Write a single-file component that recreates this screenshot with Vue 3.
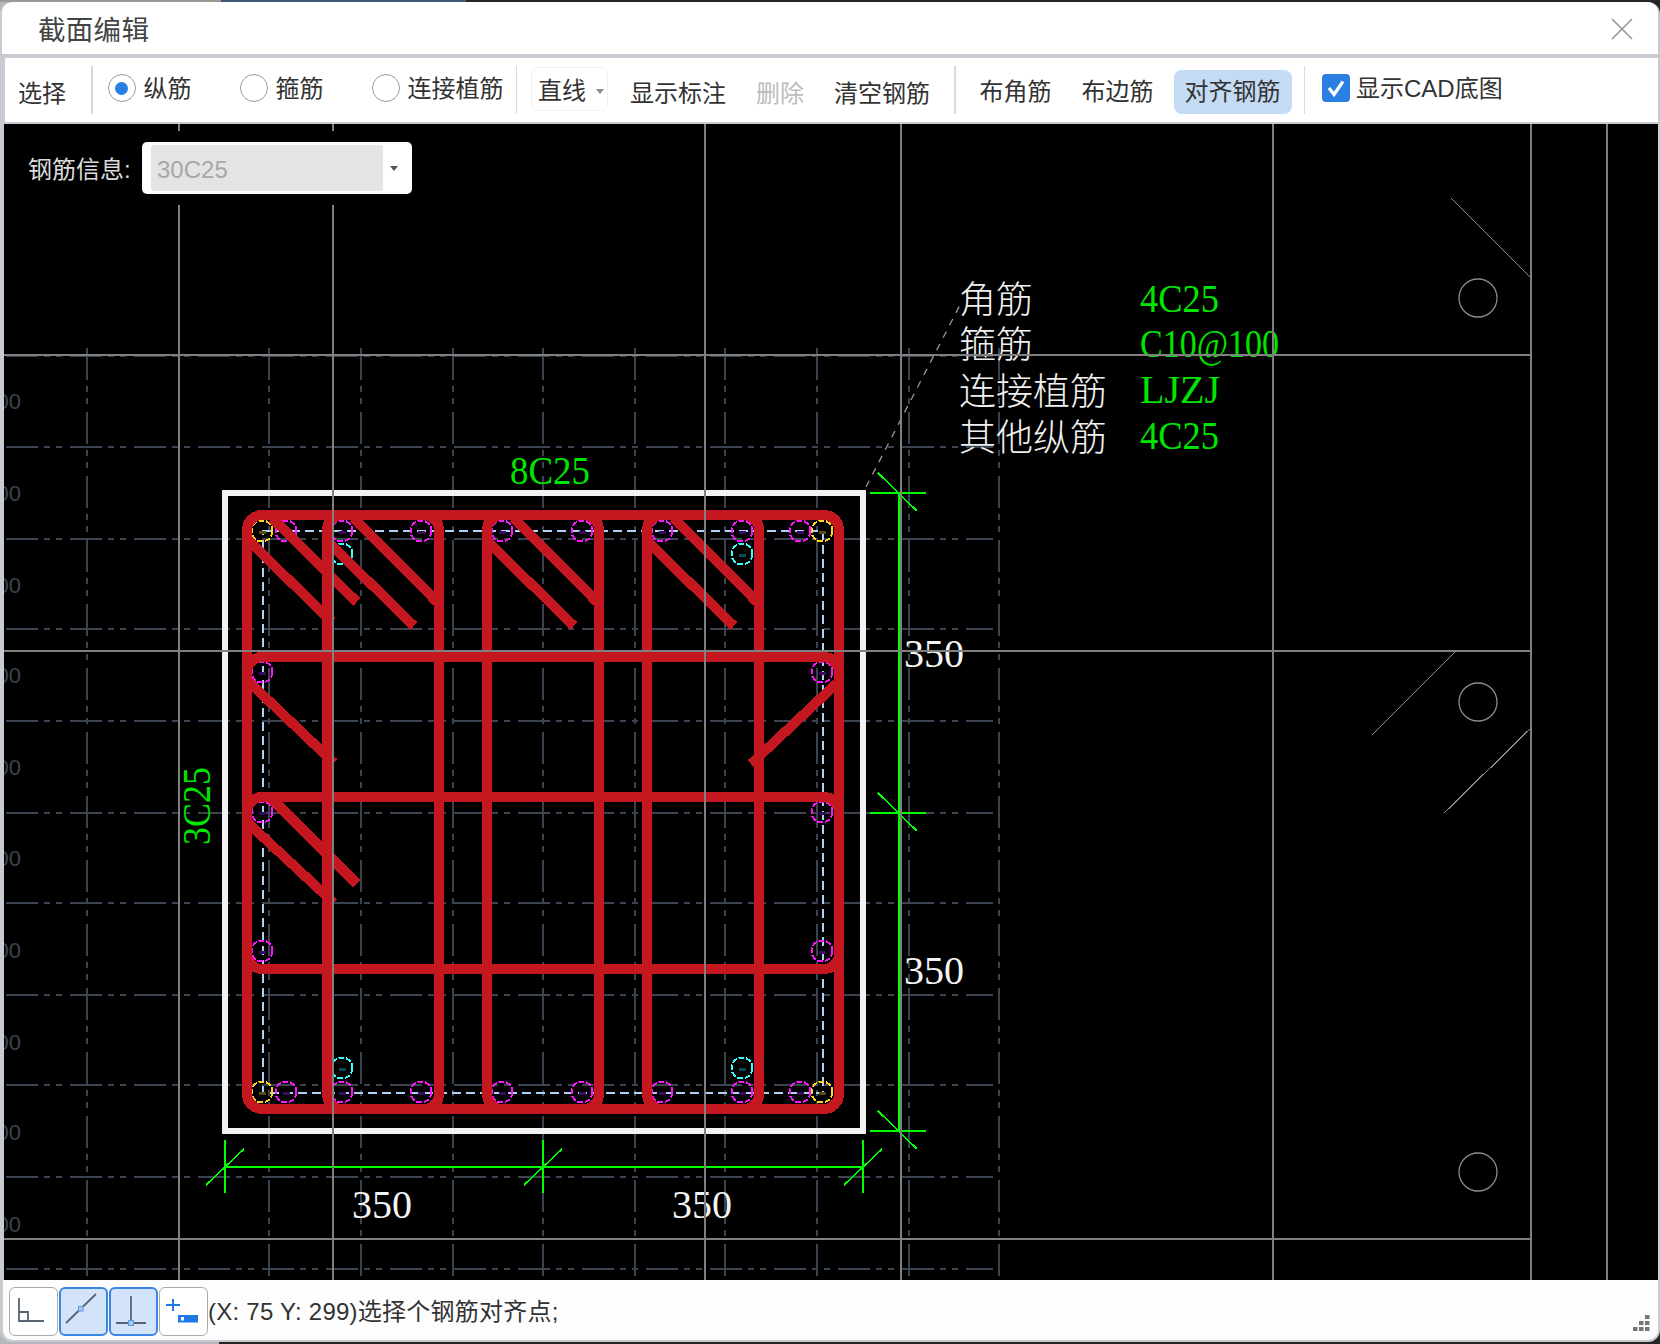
<script setup>
const gridX = [87, 179, 269, 361, 453, 543, 635, 725, 817, 909, 999]
const gridY = [356, 447, 539, 629, 721, 813, 903, 995, 1085, 1177, 1269]
const grayX = [179, 333, 705, 901, 1273, 1531, 1607]
const grayY = [355, 651, 1239]
const zeroY = [409, 501, 593, 683, 775, 866, 958, 1050, 1140, 1232]

const magenta = []
for (const x of [286, 342, 421, 502, 582, 662, 742, 800]) {
  magenta.push([x, 531], [x, 1092])
}
for (const y of [672, 812, 951]) {
  magenta.push([262, y], [822, y])
}
const bars = [
  ...magenta.map(([x, y]) => ({ x, y, c: '#ff14ff', d: '#3a0a60' })),
  ...[[262, 531], [822, 531], [262, 1092], [822, 1092]].map(([x, y]) => ({ x, y, c: '#ffd51e', d: '#5a4a10' })),
  ...[[342, 554], [742, 554], [342, 1068], [742, 1068]].map(([x, y]) => ({ x, y, c: '#33ffff', d: '#0a4a5a' }))
]

const stirrups = [
  [247, 515, 592, 594],
  [327, 515, 112, 594],
  [487, 515, 112, 594],
  [647, 515, 112, 594],
  [247, 657, 592, 312],
  [247, 797, 592, 172]
]
const hooks = [
  [249, 541, 332, 622],
  [272, 518, 357, 602],
  [327, 541, 414, 626],
  [354, 518, 437, 602],
  [487, 541, 574, 626],
  [514, 518, 597, 602],
  [647, 541, 734, 626],
  [674, 518, 757, 602],
  [249, 682, 334, 763],
  [272, 799, 357, 884],
  [249, 824, 334, 903],
  [836, 684, 751, 764]
]
const ticksV = [493, 813, 1131]
const ticksH = [225, 543, 863]
const labels = [
  { t: '角筋', y: 313 },
  { t: '箍筋', y: 358 },
  { t: '连接植筋', y: 405 },
  { t: '其他纵筋', y: 451 }
]
const values = [
  { t: '4C25', y: 312, w: 79 },
  { t: 'C10@100', y: 357, w: 139 },
  { t: 'LJZJ', y: 403, w: 80 },
  { t: '4C25', y: 449, w: 79 }
]
const dims = [
  [904, 667],
  [904, 984],
  [352, 1218],
  [672, 1218]
]
const grip = [[12, 0], [6, 6], [12, 6], [0, 12], [6, 12], [12, 12]]
</script>

<template>
  <div class="page">
    <div class="strip"></div>
    <div class="win">
      <header class="head">
        <span class="title">截面编辑</span>
        <svg class="close" viewBox="0 0 22 22" width="22" height="22">
          <path d="M1 1 L21 21 M21 1 L1 21" stroke="#999" stroke-width="1.7" fill="none" />
        </svg>
      </header>

      <div class="tools">
        <span class="txt low i-pick">选择</span>
        <i class="sep s1"></i>
        <span class="radio on r1"></span>
        <span class="txt up l1">纵筋</span>
        <span class="radio r2"></span>
        <span class="txt up l2">箍筋</span>
        <span class="radio r2"></span>
        <span class="txt up l2">连接植筋</span>
        <i class="sep s2"></i>
        <span class="drop"><span class="txt">直线</span><i class="tri"></i></span>
        <span class="txt low i-mark">显示标注</span>
        <span class="txt low off i-del">删除</span>
        <span class="txt low i-clear">清空钢筋</span>
        <i class="sep s3"></i>
        <span class="txt mid i-corner">布角筋</span>
        <span class="txt mid i-edge">布边筋</span>
        <span class="active"><span class="txt">对齐钢筋</span></span>
        <i class="sep s4"></i>
        <span class="check">
          <svg viewBox="0 0 28 28" width="28" height="28">
            <path d="M7 14 L12 20.5 L21 7.5" stroke="#fff" stroke-width="3.2" fill="none" />
          </svg>
        </span>
        <span class="txt up l3">显示CAD底图</span>
      </div>

      <div class="canvas">
        <svg class="cad" viewBox="4 124 1652 1156" width="1652" height="1156" shape-rendering="crispEdges">
          <g stroke="#3a4450" stroke-width="2" stroke-dasharray="32 6 6 6 6 8" fill="none">
            <line v-for="y in gridY" :key="'h' + y" x1="6" :y1="y" x2="993" :y2="y" />
            <line v-for="x in gridX" :key="'v' + x" :x1="x" y1="348" :x2="x" y2="1280" />
          </g>
          <text
            v-for="y in zeroY"
            :key="'z' + y"
            class="zero"
            x="21"
            :y="y"
            text-anchor="end"
          >00</text>

          <rect x="225" y="493" width="638" height="638" fill="none" stroke="#f2f2f2" stroke-width="6" />
          <rect
            x="263"
            y="531"
            width="560"
            height="562"
            fill="none"
            stroke="#b0d2f2"
            stroke-width="2"
            stroke-dasharray="9 5"
          />

          <g v-for="(b, i) in bars" :key="'b' + i">
            <circle :cx="b.x" :cy="b.y" r="10.5" fill="none" :stroke="b.c" stroke-width="2" stroke-dasharray="6 1.6" />
            <rect :x="b.x - 3" :y="b.y" width="7" height="3" :fill="b.d" />
          </g>

          <g fill="none" stroke="#c5171f" stroke-width="10">
            <rect
              v-for="(s, i) in stirrups"
              :key="'s' + i"
              :x="s[0]"
              :y="s[1]"
              :width="s[2]"
              :height="s[3]"
              rx="15"
              ry="15"
            />
            <line
              v-for="(h, i) in hooks"
              :key="'k' + i"
              :x1="h[0]"
              :y1="h[1]"
              :x2="h[2]"
              :y2="h[3]"
            />
          </g>

          <g stroke="#00ff00" fill="none">
            <line x1="899" y1="493" x2="899" y2="1131" stroke-width="2" />
            <line x1="225" y1="1167" x2="863" y2="1167" stroke-width="2" />
            <g v-for="y in ticksV" :key="'tv' + y" stroke-width="1.6">
              <line x1="870" :y1="y" x2="926" :y2="y" />
              <line x1="878" :y1="y - 20" x2="917" :y2="y + 18" />
            </g>
            <g v-for="x in ticksH" :key="'th' + x" stroke-width="1.6">
              <line :x1="x" y1="1140" :x2="x" y2="1193" stroke-width="2" />
              <line :x1="x - 19" y1="1185" :x2="x + 19" y2="1149" />
            </g>
          </g>

          <line
            x1="866"
            y1="487"
            x2="960"
            y2="305"
            stroke="#999"
            stroke-width="1.3"
            stroke-dasharray="7 7"
            shape-rendering="auto"
          />

          <g fill="none" stroke="#8a8a8a" stroke-width="1.3">
            <line x1="1451" y1="198" x2="1530" y2="277" />
            <line x1="1372" y1="735" x2="1456" y2="651" />
            <line x1="1444" y1="813" x2="1530" y2="729" />
            <circle cx="1478" cy="298" r="19" shape-rendering="auto" />
            <circle cx="1478" cy="702" r="19" shape-rendering="auto" />
            <circle cx="1478" cy="1172" r="19" shape-rendering="auto" />
          </g>

          <text class="green" x="510" y="484" textLength="80" lengthAdjust="spacingAndGlyphs">8C25</text>
          <text
            class="green"
            transform="translate(210 845) rotate(-90)"
            textLength="78"
            lengthAdjust="spacingAndGlyphs"
          >3C25</text>
          <text v-for="(d, i) in dims" :key="'d' + i" class="white" :x="d[0]" :y="d[1]">350</text>
          <text v-for="l in labels" :key="l.y" class="cjk" x="959" :y="l.y">{{ l.t }}</text>
          <text
            v-for="v in values"
            :key="v.y"
            class="green"
            x="1140"
            :y="v.y"
            :textLength="v.w"
            lengthAdjust="spacingAndGlyphs"
          >{{ v.t }}</text>

          <g stroke="#808080" stroke-width="2">
            <line v-for="x in grayX" :key="'gx' + x" :x1="x" y1="124" :x2="x" y2="1280" />
            <line v-for="y in grayY" :key="'gy' + y" x1="4" :y1="y" x2="1531" :y2="y" />
          </g>
        </svg>

        <div class="info">
          <span class="info-label">钢筋信息:</span>
          <div class="info-select">
            <span class="info-value">30C25</span>
            <i class="tri dark"></i>
          </div>
        </div>
      </div>

      <footer class="status">
        <button class="snap">
          <svg viewBox="0 0 49 49" width="49" height="49">
            <path d="M10 11 V34 H35 M10 25 H19 V34" fill="none" stroke="#596472" stroke-width="1.8" />
          </svg>
        </button>
        <button class="snap sel">
          <svg viewBox="0 0 49 49" width="49" height="49">
            <path d="M7 36 L37 7" fill="none" stroke="#596472" stroke-width="1.8" />
            <rect x="19.5" y="19.5" width="4.5" height="4.5" fill="#a8c8f0" stroke="#5b9bdf" />
          </svg>
        </button>
        <button class="snap sel">
          <svg viewBox="0 0 49 49" width="49" height="49">
            <path d="M22 9 V36 M7 36 H37" fill="none" stroke="#596472" stroke-width="1.8" />
            <rect x="19.5" y="33.5" width="5" height="5" fill="#a8c8f0" stroke="#5b9bdf" />
          </svg>
        </button>
        <button class="snap">
          <svg viewBox="0 0 49 49" width="49" height="49">
            <path d="M7 18 H21 M14 12 V24" fill="none" stroke="#1e78e6" stroke-width="2" />
            <rect x="19" y="28" width="20" height="7.5" fill="#1e78e6" />
            <rect x="22" y="30" width="3" height="3.5" fill="#fff" />
          </svg>
        </button>
        <span class="msg">(X: 75 Y: 299)选择个钢筋对齐点;</span>
        <svg class="grip" viewBox="0 0 17 17" width="17" height="17">
          <rect v-for="(g, i) in grip" :key="i" :x="g[0]" :y="g[1]" width="4.5" height="4" fill="#777" />
        </svg>
      </footer>
    </div>
  </div>
</template>

<style>
html,
body {
  margin: 0;
  background: #222;
}
</style>

<style scoped>
.page {
  width: 1660px;
  height: 1344px;
  overflow: hidden;
  background: linear-gradient(90deg, #b4b8bc 219px, #242424 219px);
  font-family: "Liberation Sans", "Noto Sans CJK SC", sans-serif;
  color: #333;
}
.strip {
  height: 2px;
  background: linear-gradient(
    90deg,
    #9a9a9a 0,
    #9a9a9a 221px,
    #3c5a7a 221px,
    #3c5a7a 466px,
    #262626 466px
  );
}
.win {
  box-sizing: border-box;
  height: 1340px;
  padding: 0 2px 2px;
  background: #c8cbd1;
  border-radius: 12px;
  overflow: hidden;
  display: flex;
  flex-direction: column;
}
.head {
  height: 52px;
  flex: none;
  background: #fff;
  display: flex;
  align-items: center;
  justify-content: space-between;
  padding: 0 25px 0 36px;
  margin-bottom: 4px;
  border-radius: 10px 10px 0 0;
}
.title {
  margin-top: 6px;
  font-size: 27.5px;
  line-height: 1;
  color: #444;
  letter-spacing: 0.3px;
}
.close {
  margin-top: 2px;
}
.tools {
  height: 64px;
  flex: none;
  margin: 0 0 2px 3px;
  background: #fff;
  display: flex;
  align-items: center;
  padding-left: 13px;
}
.txt {
  font-size: 24px;
  line-height: 1;
  white-space: nowrap;
  flex: none;
  color: #333;
}
.low {
  margin-top: 8px;
}
.mid {
  margin-top: 4px;
}
.up {
  margin-bottom: 2px;
}
.off {
  color: #bbb;
}
.sep {
  display: block;
  flex: none;
  width: 1.5px;
  height: 48px;
  background: #dadada;
}
.s1 {
  margin-left: 25px;
}
.s2 {
  margin-left: 12px;
}
.s3 {
  margin-left: 24px;
}
.s4 {
  margin-left: 12px;
}
.radio {
  box-sizing: border-box;
  flex: none;
  width: 28px;
  height: 28px;
  margin-bottom: 4px;
  border: 1.5px solid #9b9b9b;
  border-radius: 50%;
  background: #fff;
  display: flex;
  align-items: center;
  justify-content: center;
}
.radio.on::after {
  content: "";
  width: 13px;
  height: 13px;
  border-radius: 50%;
  background: #2b7fe3;
}
.r1 {
  margin-left: 15px;
}
.l1 {
  margin-left: 8px;
}
.r2 {
  margin-left: 48px;
}
.l2 {
  margin-left: 8px;
}
.l3 {
  margin-left: 6px;
}
.drop {
  box-sizing: border-box;
  flex: none;
  width: 77px;
  height: 44px;
  margin-left: 14px;
  margin-bottom: 2px;
  padding: 4px 0 0 6px;
  border: 1px solid #f1f1f1;
  border-radius: 7px;
  display: flex;
  align-items: center;
  gap: 10px;
}
.tri {
  display: block;
  flex: none;
  width: 0;
  height: 0;
  border-left: 4px solid transparent;
  border-right: 4px solid transparent;
  border-top: 5px solid #8c8c8c;
}
.tri.dark {
  border-top-color: #555;
}
.i-mark {
  margin-left: 22px;
}
.i-del {
  margin-left: 30px;
}
.i-clear {
  margin-left: 30px;
}
.i-corner {
  margin-left: 24px;
}
.i-edge {
  margin-left: 30px;
}
.active {
  flex: none;
  width: 118px;
  height: 44px;
  margin: 4px 0 0 20px;
  border-radius: 8px;
  background: #c3dbf3;
  display: flex;
  align-items: center;
  justify-content: center;
}
.check {
  flex: none;
  width: 28px;
  height: 28px;
  margin: 0 0 4px 17px;
  border-radius: 4px;
  background: #2b7fe3;
}
.check svg {
  display: block;
}
.canvas {
  position: relative;
  height: 1156px;
  flex: none;
  margin-left: 2px;
  background: #000;
  overflow: hidden;
}
.cad {
  display: block;
}
.zero {
  font-family: "Liberation Sans", sans-serif;
  font-size: 22px;
  fill: #3a4450;
}
.green {
  font-family: "Liberation Serif", serif;
  font-size: 40px;
  fill: #00e600;
}
.white {
  font-family: "Liberation Serif", serif;
  font-size: 40px;
  fill: #f4f4f4;
}
.cjk {
  font-family: "Liberation Serif", "Noto Sans CJK SC", serif;
  font-size: 37px;
  font-weight: 300;
  fill: #f0f0f0;
}
.info {
  position: absolute;
  left: 0;
  top: 7px;
  width: 412px;
  height: 74px;
  background: #000;
  display: flex;
  align-items: center;
}
.info-label {
  margin: 4px 0 0 24px;
  width: 114px;
  flex: none;
  font-size: 24px;
  line-height: 1;
  color: #dcdcdc;
  white-space: nowrap;
}
.info-select {
  box-sizing: border-box;
  flex: none;
  width: 270px;
  height: 52px;
  padding: 3px 0 3px 9px;
  background: #fff;
  border-radius: 5px;
  display: flex;
  align-items: center;
}
.info-value {
  box-sizing: border-box;
  width: 232px;
  height: 46px;
  padding: 2px 0 0 6px;
  margin-right: 7px;
  background: #e4e4e4;
  border-radius: 3px;
  font-size: 24px;
  line-height: 46px;
  color: #a8a8a8;
}
.status {
  height: 60px;
  flex: none;
  position: relative;
  margin-left: 1px;
  box-sizing: border-box;
  padding: 7px 0 0 6px;
  background: #fdfdfd;
  display: flex;
  align-items: flex-start;
  border-radius: 0 0 10px 10px;
}
.snap {
  box-sizing: border-box;
  flex: none;
  width: 49px;
  height: 49px;
  margin: 0 1px 0 0;
  padding: 0;
  background: #fff;
  border: 1.5px solid #aaa;
  border-radius: 6px;
  overflow: hidden;
  position: relative;
}
.snap svg {
  position: absolute;
  left: -1.5px;
  top: -1.5px;
}
.snap.sel {
  background: #d3e4fa;
  border: 2px solid #3a86e6;
}
.snap.sel svg {
  left: -2px;
  top: -2px;
}
.msg {
  margin: 13px 0 0 -1px;
  font-size: 24px;
  line-height: 1;
  letter-spacing: 0.25px;
  color: #333;
  white-space: nowrap;
}
.grip {
  position: absolute;
  right: 8px;
  bottom: 8px;
}
</style>
